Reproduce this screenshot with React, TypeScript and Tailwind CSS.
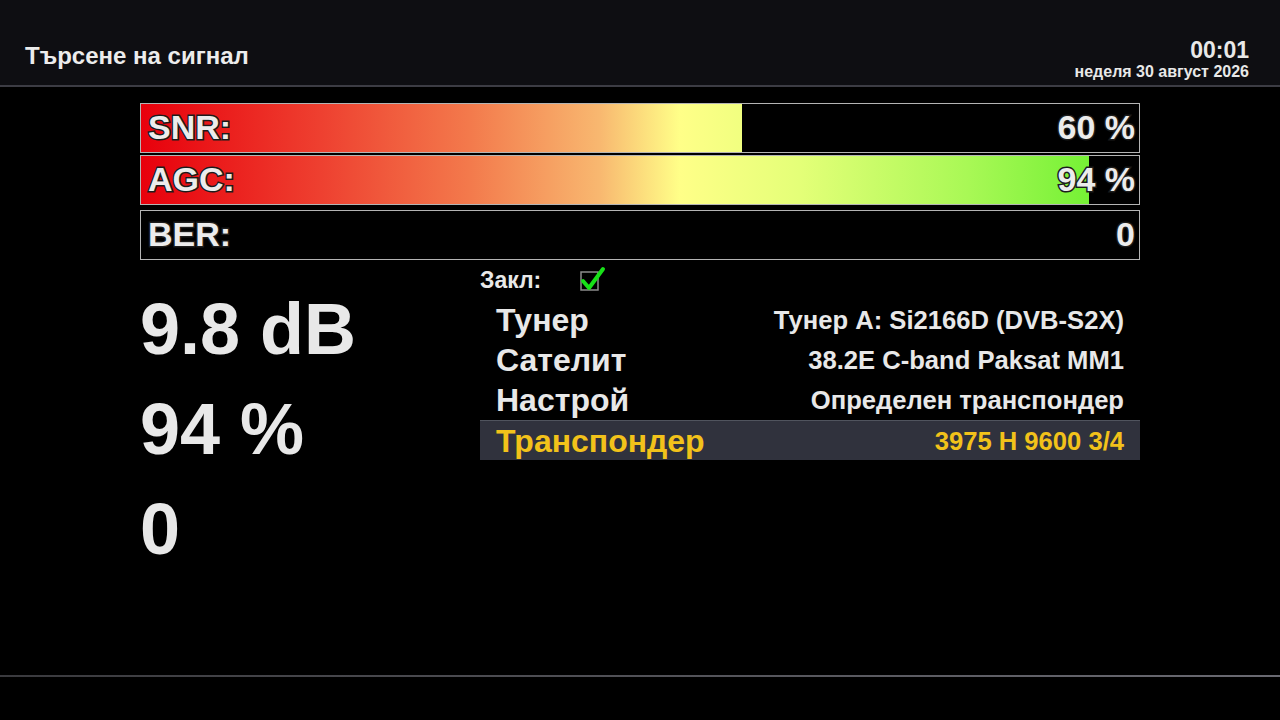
import React from "react";

const font = { fontFamily: '"Liberation Sans", Arial, sans-serif' };

function Bar({ label, value, pct, className = "" }: { label: string; value: string; pct: number; className?: string }) {
  return (
    <div className={`relative h-[50px] w-[1000px] border border-[#b4b4b4] bg-black ${className}`}>
      <div className="absolute left-0 top-0 h-full overflow-hidden" style={{ width: `${pct}%` }}>
        <div className="h-full w-[998px] bg-[linear-gradient(90deg,#e8000c_0%,#ee4030_18%,#f37a4c_33%,#f8b870_46%,#ffff88_54%,#e4ff78_66%,#a8f855_83%,#60ee28_100%)]" />
      </div>
      <div className="relative flex h-full items-start justify-between pl-[7px] pr-[4px] pt-[1px] text-[34px] font-bold leading-[44px] text-[#ececec] [-webkit-text-stroke:3px_#1c1c1c] [paint-order:stroke_fill]">
        <span>{label}</span>
        <span>{value}</span>
      </div>
    </div>
  );
}

function Check() {
  return (
    <svg width="26" height="24" viewBox="0 0 26 24" className="overflow-visible">
      <rect x="1" y="4" width="17" height="18" fill="none" stroke="#8c8c8c" strokeWidth="1.5" />
      <path d="M3 13 L9 20 L23 1" fill="none" stroke="#18e018" strokeWidth="4" strokeLinecap="round" strokeLinejoin="round" />
    </svg>
  );
}

function Row({ label, value, active = false }: { label: string; value: string; active?: boolean }) {
  return (
    <div
      className={`flex h-[40px] items-center justify-between pl-4 pr-4 ${
        active ? "border-t border-[#50545e] bg-[#30323d] text-[#f2c21a]" : "text-[#e8e8e8]"
      }`}
    >
      <span className="text-[32px] font-bold leading-[36px]">{label}</span>
      <span className="text-[25.6px] font-bold leading-[30px]">{value}</span>
    </div>
  );
}

export default function App() {
  return (
    <div className="flex h-[720px] w-[1280px] flex-col bg-black" style={font}>
      <header className="flex h-[87px] shrink-0 justify-between border-b-2 border-[#3c3c44] bg-[#0e0e12] pl-[25px] pr-[31px]">
        <div className="mt-[42px] text-[24px] font-bold leading-[28px] text-[#ececec]">Търсене на сигнал</div>
        <div className="mt-[38px] flex flex-col items-end text-[#e8e8e8]">
          <div className="text-[23px] font-bold leading-[24px]">00:01</div>
          <div className="text-[16px] font-bold leading-[19px]">неделя 30 август 2026</div>
        </div>
      </header>

      <main className="flex flex-1 flex-col pl-[140px] pt-[16px]">
        <Bar label="SNR:" value="60 %" pct={60.2} />
        <Bar label="AGC:" value="94 %" pct={95} className="mt-[2px]" />
        <Bar label="BER:" value="0" pct={0} className="mt-[5px]" />

        <div className="flex w-[1000px]">
          <div className="mt-[19px] w-[340px] text-[72px] font-bold leading-[100px] text-[#e8e8e8]">
            <div>9.8 dB</div>
            <div>94 %</div>
            <div>0</div>
          </div>
          <div className="flex w-[660px] flex-col">
            <div className="flex h-[40px] items-center text-[#e8e8e8]">
              <span className="w-[100px] text-[23px] font-bold">Закл:</span>
              <Check />
            </div>
            <Row label="Тунер" value="Тунер A: Si2166D (DVB-S2X)" />
            <Row label="Сателит" value="38.2E C-band Paksat MM1" />
            <Row label="Настрой" value="Определен транспондер" />
            <Row label="Транспондер" value="3975 H 9600 3/4" active />
          </div>
        </div>
      </main>

      <footer className="h-[45px] shrink-0">
        <div className="h-[2px] bg-gradient-to-r from-[#3a3a3e] to-[#6a6a72]" />
      </footer>
    </div>
  );
}
